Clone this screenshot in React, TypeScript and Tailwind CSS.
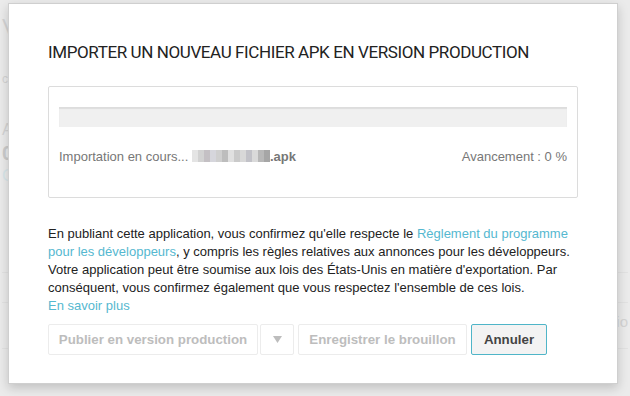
import React from "react";

function BlurredName() {
  const blocks = [
    "#e4e4e4", "#d2d2d2", "#c4c0c4", "#d6d6dc", "#cfcfcf", "#bdbdbd", "#e0e0e0", "#cacaca", "#d8d8d8", "#c2c2c8", "#dadada", "#b8b8b8", "#a6a6a6",
  ];
  return (
    <span className="inline-flex h-[12px] items-stretch align-[-1px]">
      {blocks.map((c, i) => (
        <span key={i} className="w-[6px]" style={{ background: c }} />
      ))}
    </span>
  );
}

export default function App() {
  return (
    <div className="relative h-[396px] w-[630px] overflow-hidden bg-[#ebebeb] font-['Liberation_Sans',Arial,sans-serif]">
      {/* page behind the overlay */}
      <div className="flex h-full flex-col px-[2px] text-[#d4d4d4]">
        <div className="mt-[14px] text-[22px] leading-[26px]">V</div>
        <div className="mt-[30px] text-[12px]">c</div>
        <div className="mt-[30px] text-[16px]">A</div>
        <div className="text-[20px] font-bold leading-[22px] text-[#cccccc]">0</div>
        <div className="text-[16px] text-[#d8e6ea]">G</div>
        <div className="mt-[84px] border-t border-[#e2e2e2]" />
        <div className="mt-[29px] flex justify-end border-t border-[#e2e2e2] pt-[8px] text-[15px] text-[#d4d4d4]">io</div>
        <div className="mt-[14px] border-t border-[#e2e2e2]" />
      </div>

      {/* dialog overlay */}
      <div className="absolute left-[8px] top-[3px] flex h-[381px] w-[610px] flex-col border border-[#cfcfcf] bg-white px-[39px] shadow-[0_4px_10px_rgba(0,0,0,0.18)]">
        <h1 className="mt-[38px] font-['Roboto',sans-serif] text-[17px] leading-[20px] tracking-[-0.4px] text-[#222]">
          IMPORTER UN NOUVEAU FICHIER APK EN VERSION PRODUCTION
        </h1>

        <div className="mt-[24px] flex h-[112px] w-[530px] flex-col rounded-[2px] border border-[#dcdcdc] px-[10px] pt-[20px]">
          <div className="h-[20px] w-full bg-[#f0f0f0] shadow-[inset_0_2px_1px_rgba(0,0,0,0.08)]" />
          <div className="mt-[22px] flex items-center justify-between text-[13px] leading-[16px] text-[#777]">
            <span>
              Importation en cours...{" "}
              <BlurredName />
              <span className="font-bold">.apk</span>
            </span>
            <span>Avancement : 0 %</span>
          </div>
        </div>

        <p className="mt-[27px] w-[530px] text-[13px] leading-[18px] text-[#222]">
          En publiant cette application, vous confirmez qu'elle respecte le{" "}
          <a className="text-[#55b8d0]">Règlement du programme pour les développeurs</a>, y compris les règles relatives
          aux annonces pour les développeurs. Votre application peut être soumise aux lois des États-Unis en matière
          d'exportation. Par conséquent, vous confirmez également que vous respectez l'ensemble de ces lois.
          <br />
          <a className="text-[#55b8d0]">En savoir plus</a>
        </p>

        <div className="mt-[9px] flex items-center text-[13.3px] font-bold">
          <button className="h-[31px] w-[210px] rounded-[2px] border border-[#ececec] bg-white text-[#bdbdbd]">
            Publier en version production
          </button>
          <button className="ml-[2px] flex h-[31px] w-[34px] items-center justify-center rounded-[2px] border border-[#ececec] bg-white text-[#bdbdbd]">
            <svg width="9" height="7" viewBox="0 0 9 7">
              <path d="M0 0h9L4.5 7z" fill="#bdbdbd" />
            </svg>
          </button>
          <button className="ml-[4px] h-[31px] w-[169px] rounded-[2px] border border-[#ececec] bg-white text-[#bdbdbd]">
            Enregistrer le brouillon
          </button>
          <button className="ml-[4px] h-[31px] w-[76px] rounded-[2px] border border-[#4fb5c8] bg-[#f3f3f3] text-[#444]">
            Annuler
          </button>
        </div>
      </div>
    </div>
  );
}
